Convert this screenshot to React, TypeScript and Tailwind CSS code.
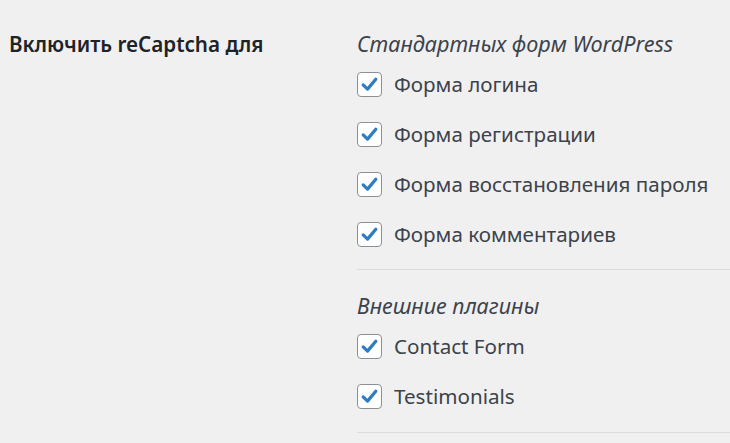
import React from "react";

function Box({ label }: { label: string }) {
  return (
    <label className="flex items-center h-[50px]">
      <span className="w-[25px] h-[25px] shrink-0 rounded-[4px] border-[1.5px] border-[#8c8f94] bg-white flex items-center justify-center">
        <svg width="21" height="21" viewBox="0 0 20 20">
          <path d="M4 10.4 L8.1 14.4 L16 5" fill="none" stroke="#2f7cc0" strokeWidth="3.1" strokeLinecap="round" strokeLinejoin="round" />
        </svg>
      </span>
      <span className="ml-[12px] text-[20.6px] leading-[30px] text-[#3c434a]">{label}</span>
    </label>
  );
}

export default function App() {
  return (
    <div
      className="w-[730px] h-[443px] bg-[#f0f0f1] overflow-hidden flex"
      style={{ fontFamily: '"Noto Sans", "Open Sans", sans-serif' }}
    >
      <div className="w-[357px] shrink-0 pl-[9px] pt-[29px]">
        <div className="text-[20.6px] leading-[30px] font-semibold text-[#1d2327]">Включить reCaptcha для</div>
      </div>
      <div className="flex-1 pt-[29px]">
        <div className="text-[21.6px] leading-[30px] italic text-[#3c434a]">Стандартных форм WordPress</div>
        <Box label="Форма логина" />
        <Box label="Форма регистрации" />
        <Box label="Форма восстановления пароля" />
        <Box label="Форма комментариев" />
        <div className="mt-[10px] h-px bg-[#dcdcde]" />
        <div className="mt-[21px] text-[21.6px] leading-[30px] italic text-[#3c434a]">Внешние плагины</div>
        <Box label="Contact Form" />
        <Box label="Testimonials" />
        <div className="mt-[11px] h-px bg-[#dcdcde]" />
      </div>
    </div>
  );
}
